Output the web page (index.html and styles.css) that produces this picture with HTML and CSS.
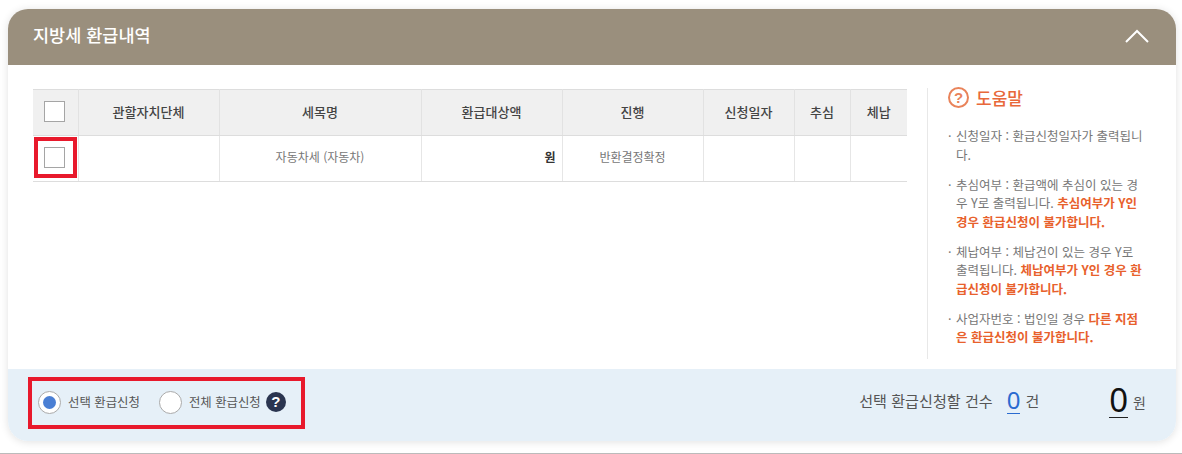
FILE: index.html
```html
<!DOCTYPE html>
<html lang="ko">
<head>
    <meta charset="UTF-8">
    <title>지방세 환급내역</title>
    <link rel="stylesheet" href="styles.css">
</head>
<body>
<div class="card">
    <div class="card-head">
        <h2>지방세 환급내역</h2>
        <svg class="arrow" width="26" height="16" viewBox="0 0 26 16"><path d="M2 14 L13 3 L24 14" fill="none" stroke="#fff" stroke-width="2"/></svg>
    </div>
    <div class="card-body">
        <div class="list">
            <table>
                <colgroup>
                    <col class="c1"><col class="c2"><col class="c3"><col class="c4"><col class="c5"><col class="c6"><col class="c7"><col class="c8">
                </colgroup>
                <thead>
                    <tr>
                        <th><span class="check"></span></th>
                        <th>관할자치단체</th>
                        <th>세목명</th>
                        <th>환급대상액</th>
                        <th>진행</th>
                        <th>신청일자</th>
                        <th>추심</th>
                        <th>체납</th>
                    </tr>
                </thead>
                <tbody>
                    <tr>
                        <td class="check-cell"><span class="check"></span><i class="mark mark-check"></i></td>
                        <td></td>
                        <td>자동차세 (자동차)</td>
                        <td class="won">원</td>
                        <td>반환결정확정</td>
                        <td></td>
                        <td></td>
                        <td></td>
                    </tr>
                </tbody>
            </table>
        </div>
        <div class="help">
            <h3>
                <svg width="21" height="21" viewBox="0 0 21 21"><circle cx="10.5" cy="10.5" r="9.5" fill="none" stroke="#e9835a" stroke-width="2"/><text x="10.5" y="16" text-anchor="middle" class="help-q">?</text></svg>
                도움말
            </h3>
            <ul>
                <li>신청일자 : 환급신청일자가 출력됩니다.</li>
                <li>추심여부 : 환급액에 추심이 있는 경우 Y로 출력됩니다. <b>추심여부가 Y인 경우 환급신청이 불가합니다.</b></li>
                <li>체납여부 : 체납건이 있는 경우 Y로 출력됩니다. <b>체납여부가 Y인 경우 환급신청이 불가합니다.</b></li>
                <li>사업자번호 : 법인일 경우 <b>다른 지점은 환급신청이 불가합니다.</b></li>
            </ul>
        </div>
    </div>
    <div class="card-foot">
        <div class="options">
            <i class="mark mark-options"></i>
            <label class="opt"><span class="radio on"></span>선택 환급신청</label>
            <label class="opt"><span class="radio"></span>전체 환급신청<span class="qmark">?</span></label>
        </div>
        <div class="sum">
            <span class="sum-label">선택 환급신청할 건수</span>
            <span class="count">0</span>
            <span class="unit">건</span>
            <span class="total">0</span>
            <span class="unit-small">원</span>
        </div>
    </div>
</div>
<div class="page-line"></div>
</body>
</html>
```

FILE: styles.css
```css
* {
    box-sizing: border-box;
}

body {
    margin: 0;
    padding: 9px 6px 0 8px;
    height: 454px;
    overflow: hidden;
    background: #fff;
    font-family: "Noto Sans CJK KR", "Noto Sans", sans-serif;
    font-size: 12px;
    color: #666;
    position: relative;
}

.card {
    height: 432px;
    border-radius: 20px;
    background: #fff;
    display: flex;
    flex-direction: column;
    box-shadow: 0 1px 8px rgba(0, 0, 0, 0.12);
}

.card-head {
    height: 56px;
    flex: none;
    background: #9a8f7d;
    border-radius: 20px 20px 0 0;
    display: flex;
    align-items: center;
    justify-content: space-between;
    padding: 0 26px 5px 25px;
}
.card-head h2 {
    margin: 0;
    font-size: 17.5px;
    font-weight: 500;
    color: #fff;
}
.card-head .arrow {
    margin-top: 2px;
}

.card-body {
    height: 304px;
    flex: none;
    display: flex;
    padding: 24px 0 0 25px;
}

.list {
    width: 874px;
    flex: none;
}

table {
    width: 874px;
    table-layout: fixed;
    border-collapse: collapse;
    border-top: 1px solid #ddd;
}
.c1 { width: 45px; }
.c2 { width: 141px; }
.c3 { width: 202px; }
.c4 { width: 141px; }
.c5 { width: 141px; }
.c6 { width: 91px; }
.c7 { width: 56px; }
.c8 { width: 57px; }

th {
    height: 46px;
    background: #f0f0f0;
    border-bottom: 1px solid #ddd;
    border-left: 1px solid #e2e2e2;
    font-size: 13px;
    font-weight: 500;
    color: #444;
    padding: 0 0 3px 0;
}
th:first-child {
    padding: 0 2px 2px 0;
}
td {
    height: 46px;
    border-bottom: 1px solid #ddd;
    border-left: 1px solid #e6e6e6;
    text-align: center;
    font-size: 12px;
    color: #777;
    padding: 0 0 4px 0;
}
th:first-child, td:first-child {
    border-left: 0;
}
td.won {
    text-align: right;
    padding-right: 6px;
    font-weight: 700;
    color: #333;
}
.check-cell {
    position: relative;
    padding: 0 2px 2px 0;
}

.check {
    display: inline-block;
    width: 21px;
    height: 21px;
    background: #fff;
    border: 1px solid #a5a5a5;
    vertical-align: middle;
}

.mark {
    position: absolute;
    border: 4px solid #e8192c;
    display: block;
}
.mark-check {
    left: 1px;
    top: 1px;
    width: 43px;
    height: 41px;
}
.mark-options {
    left: -10px;
    top: 8px;
    width: 277px;
    height: 52px;
}

.help {
    margin-left: 20px;
    width: 228px;
    height: 271px;
    margin-top: -1px;
    border-left: 1px solid #e8e8e8;
    padding-left: 20px;
}
.help h3 {
    margin: -3px 0 18px 0;
    display: flex;
    align-items: center;
    gap: 7px;
    font-size: 17px;
    font-weight: 500;
    color: #e8683a;
    height: 24px;
}
.help-q {
    font-family: "Liberation Sans", sans-serif;
    font-size: 15px;
    font-weight: 700;
    fill: #e9835a;
}
.help ul {
    list-style: none;
    margin: 0;
    padding: 0;
    width: 200px;
}
.help li {
    position: relative;
    padding-left: 8px;
    margin-bottom: 11.5px;
    line-height: 18.5px;
    font-size: 12.5px;
    color: #777;
    word-break: break-all;
}
.help li:before {
    content: "·";
    position: absolute;
    left: 0;
    top: 0;
}
.help li b {
    color: #e8612c;
    font-weight: 700;
}

.card-foot {
    flex: 1;
    background: #e6f0f8;
    border-radius: 0 0 20px 20px;
    display: flex;
    align-items: center;
    justify-content: space-between;
    padding: 0 30px 6px 30px;
}

.options {
    display: flex;
    align-items: center;
    gap: 19px;
    position: relative;
    align-self: stretch;
}
.opt {
    display: flex;
    align-items: center;
    gap: 7px;
    font-size: 12.4px;
    color: #555;
}
.radio {
    width: 23px;
    height: 23px;
    border-radius: 50%;
    background: #fff;
    border: 1px solid #aaa;
    display: inline-block;
    position: relative;
}
.radio.on:after {
    content: "";
    position: absolute;
    left: 4px;
    top: 4px;
    width: 13px;
    height: 13px;
    border-radius: 50%;
    background: #4a7fd4;
}
.qmark {
    width: 20px;
    height: 20px;
    margin-left: -2px;
    border-radius: 50%;
    background: #2b3550;
    color: #fff;
    font-family: "Liberation Sans", sans-serif;
    font-size: 15px;
    font-weight: 700;
    text-align: center;
    line-height: 20px;
}

.sum {
    display: flex;
    align-items: center;
    margin-bottom: 4px;
}
.sum-label {
    font-size: 15.1px;
    color: #555;
}
.count {
    margin-left: 14px;
    font-family: "Noto Sans", sans-serif;
    font-size: 24px;
    line-height: 26px;
    color: #2a6bd0;
    border-bottom: 1px solid #2a6bd0;
}
.unit {
    margin-left: 5px;
    font-size: 15px;
    color: #555;
}
.total {
    margin-left: 70px;
    font-family: "Noto Sans", sans-serif;
    font-size: 33px;
    line-height: 34px;
    color: #111;
    border-bottom: 1px solid #222;
}
.unit-small {
    margin: 4px 0 0 5px;
    font-size: 14px;
    color: #555;
}

.page-line {
    position: absolute;
    left: 0;
    right: 0;
    bottom: 0;
    height: 1px;
    background: #bbb;
}
```
